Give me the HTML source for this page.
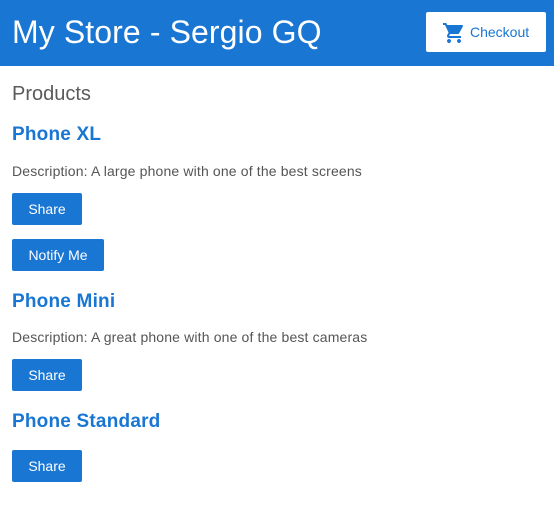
<!DOCTYPE html>
<html><head><style>
*{margin:0;padding:0;box-sizing:border-box}
body{width:554px;height:515px;background:#fff;font-family:"Liberation Sans",sans-serif;color:#555;position:relative;overflow:hidden}
.bar{position:absolute;left:0;top:0;width:554px;height:66px;background:#1976d2}
.title{position:absolute;left:12px;top:12px;font-size:32px;color:#fff;line-height:40px;letter-spacing:0.1px}
.co{position:absolute;left:426px;top:12px;width:120px;height:40px;background:#fff;border-radius:2px;color:#1976d2;font-size:14px;line-height:40px}
.co svg{position:absolute;left:16px;top:9px}
.co span{position:absolute;left:44px}
.t{position:absolute;left:12px}
.h2{font-size:20px;color:#5a5a5a}
.h3{font-size:19px;font-weight:bold;color:#1976d2;letter-spacing:0.2px}
.d{font-size:14px;color:#555;letter-spacing:0.15px}
.b{position:absolute;left:12px;height:32px;background:#1976d2;color:#fff;font-size:14px;line-height:32px;text-align:center;border-radius:2px}
</style></head><body>
<div class="bar"></div>
<div class="title">My Store - Sergio GQ</div>
<div class="co"><svg width="24" height="24" viewBox="0 0 24 24"><path fill="#1976d2" d="M7 18c-1.1 0-2 .9-2 2s.9 2 2 2 2-.9 2-2-.9-2-2-2zM1 2v2h2l3.6 7.59-1.35 2.45c-.16.28-.25.61-.25.96 0 1.1.9 2 2 2h12v-2H7.42c-.14 0-.25-.11-.25-.25l.03-.12.9-1.63h7.45c.75 0 1.41-.41 1.75-1.03l3.58-6.490A1 1 0 0 0 20 4H5.21l-.94-2H1zm16 16c-1.1 0-2 .9-2 2s.9 2 2 2 2-.9 2-2-.9-2-2-2z"/></svg><span>Checkout</span></div>
<div class="t h2" style="top:83px">Products</div>
<div class="t h3" style="top:124px">Phone XL</div>
<div class="t d" style="top:163px">Description: A large phone with one of the best screens</div>
<div class="b" style="top:193px;width:70px">Share</div>
<div class="b" style="top:239px;width:92px">Notify Me</div>
<div class="t h3" style="top:291px">Phone Mini</div>
<div class="t d" style="top:329px">Description: A great phone with one of the best cameras</div>
<div class="b" style="top:359px;width:70px">Share</div>
<div class="t h3" style="top:411px">Phone Standard</div>
<div class="b" style="top:450px;width:70px">Share</div>
</body></html>
